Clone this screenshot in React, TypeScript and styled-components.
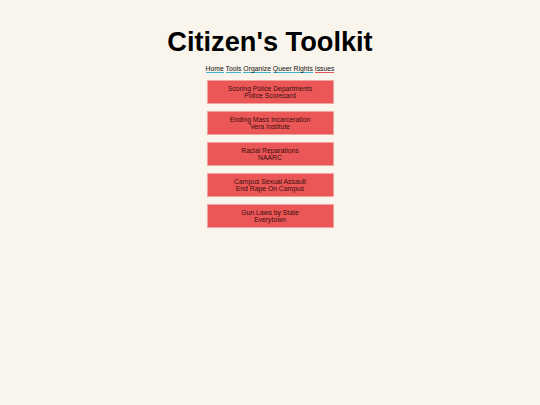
import React from 'react'
import styled, { createGlobalStyle } from 'styled-components'

const GlobalStyle = createGlobalStyle`
  html, body {
    margin: 0;
    padding: 0;
    background: #f9f4ec;
  }
  body {
    font-family: "Liberation Sans", Arial, sans-serif;
    color: #111;
  }
`

const Page = styled.main`
  display: flex;
  flex-direction: column;
  align-items: center;
  padding-top: 27px;
  min-height: 405px;
  box-sizing: border-box;
`

const Title = styled.h1`
  margin: 0;
  font-size: 27.2px;
  font-weight: 700;
  line-height: 30.7px;
  color: #000;
`

const Nav = styled.nav`
  display: flex;
  gap: 1.9px;
  margin-top: 7px;
  font-size: 6.8px;
  line-height: 7.7px;
`

const NavLink = styled.a<{ $accent: string }>`
  color: #111;
  text-decoration: none;
  border-bottom: 1.5px solid ${p => p.$accent};
`

const CardList = styled.section`
  display: flex;
  flex-direction: column;
  gap: 7px;
  margin-top: 7px;
`

const Card = styled.a`
  display: block;
  width: 127px;
  box-sizing: border-box;
  padding: 3.3px 4px;
  background: #eb5757;
  border: 1px solid #f2a3a0;
  color: #3a0d0d;
  text-align: center;
  font-size: 6.8px;
  line-height: 7.7px;
  text-decoration: none;
`

const links = [
  { label: 'Home', accent: '#3fb2c9' },
  { label: 'Tools', accent: '#3fb2c9' },
  { label: 'Organize', accent: '#3fb2c9' },
  { label: 'Queer Rights', accent: '#3fb2c9' },
  { label: 'Issues', accent: '#e45656' },
]

const tools = [
  ['Scoring Police Departments', 'Police Scorecard'],
  ['Ending Mass Incarceration', 'Vera Institute'],
  ['Racial Reparations', 'NAARC'],
  ['Campus Sexual Assault', 'End Rape On Campus'],
  ['Gun Laws by State', 'Everytown'],
]

export default function App() {
  return (
    <>
      <GlobalStyle />
      <Page>
        <Title>Citizen's Toolkit</Title>
        <Nav>
          {links.map(l => (
            <NavLink key={l.label} href="#" $accent={l.accent}>
              {l.label}
            </NavLink>
          ))}
        </Nav>
        <CardList>
          {tools.map(([topic, org]) => (
            <Card key={topic} href="#">
              {topic}
              <br />
              {org}
            </Card>
          ))}
        </CardList>
      </Page>
    </>
  )
}
